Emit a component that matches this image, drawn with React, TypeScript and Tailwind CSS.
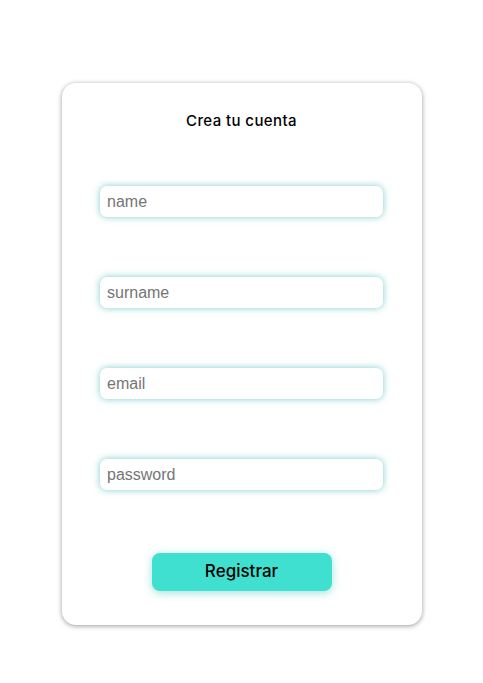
export default function App() {
  const fields = ["name", "surname", "email", "password"];

  return (
    <div className="min-h-screen bg-white pt-[83px]">
      <div className="mx-auto flex h-[542px] w-[360px] flex-col items-center rounded-[14px] bg-white pt-[27px] shadow-[0_1px_5px_rgba(0,0,0,0.4)]">
        <h1 className="text-[15px] font-medium leading-[22px] tracking-[0.4px] text-black [font-family:Inter,'Noto_Sans',sans-serif]">
          Crea tu cuenta
        </h1>

        <form className="mt-[54px] flex flex-col items-center gap-[60px]" onSubmit={(e) => e.preventDefault()}>
          {fields.map((f) => (
            <input
              key={f}
              type={f === "password" ? "password" : f === "email" ? "email" : "text"}
              placeholder={f}
              className="h-[31px] w-[283px] rounded-[7px] bg-white px-[7px] text-[16px] text-black outline-none shadow-[0_0_7px_rgba(40,170,170,0.6)] placeholder:text-[#757575] [font-family:'Liberation_Sans',Arial,sans-serif]"
            />
          ))}

          <button
            type="submit"
            className="mt-[3px] h-[38px] w-[180px] rounded-[8px] bg-[#40e0d0] text-[17px] font-medium text-black shadow-[0_2px_8px_rgba(64,200,190,0.5)] [font-family:Inter,'Noto_Sans',sans-serif]"
          >
            Registrar
          </button>
        </form>
      </div>
    </div>
  );
}
